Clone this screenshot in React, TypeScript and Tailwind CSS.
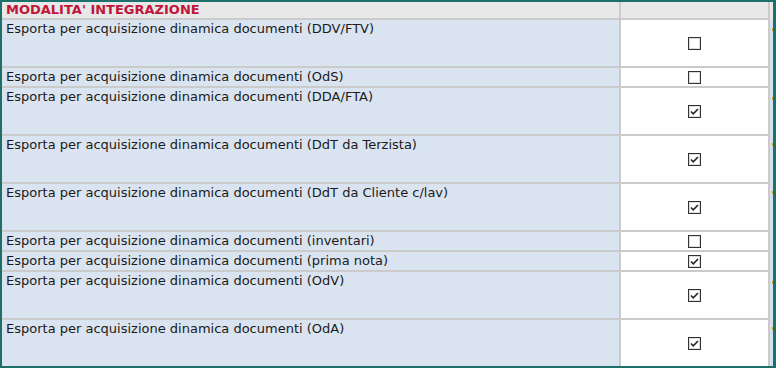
import React from "react";

type Row = { label: string; tall: boolean; checked: boolean };

const rows: Row[] = [
  { label: "Esporta per acquisizione dinamica documenti (DDV/FTV)", tall: true, checked: false },
  { label: "Esporta per acquisizione dinamica documenti (OdS)", tall: false, checked: false },
  { label: "Esporta per acquisizione dinamica documenti (DDA/FTA)", tall: true, checked: true },
  { label: "Esporta per acquisizione dinamica documenti (DdT da Terzista)", tall: true, checked: true },
  { label: "Esporta per acquisizione dinamica documenti (DdT da Cliente c/lav)", tall: true, checked: true },
  { label: "Esporta per acquisizione dinamica documenti (inventari)", tall: false, checked: false },
  { label: "Esporta per acquisizione dinamica documenti (prima nota)", tall: false, checked: true },
  { label: "Esporta per acquisizione dinamica documenti (OdV)", tall: true, checked: true },
  { label: "Esporta per acquisizione dinamica documenti (OdA)", tall: true, checked: true },
];

function Box({ checked }: { checked: boolean }) {
  return (
    <div className="w-[13px] h-[13px] border border-[#333333] bg-white flex items-center justify-center shadow-[inset_0_0_0_1px_#dcdcdc]">
      {checked && (
        <svg width="11" height="11" viewBox="0 0 11 11">
          <path d="M2 5.5 L4.3 7.8 L9 3" fill="none" stroke="#222" strokeWidth="1.6" />
        </svg>
      )}
    </div>
  );
}

export default function App() {
  return (
    <div
      className="w-[776px] h-[368px] border-l-2 border-t-2 border-b-2 border-r-[3px] border-[#1d6f69] flex bg-white overflow-hidden"
      style={{ fontFamily: '"DejaVu Sans", Verdana, sans-serif' }}
    >
      <div className="flex flex-col w-[766px]">
        <div className="flex h-[18px] border-b-2 border-[#cbcbcb] bg-[#e8e8e8]">
          <div className="w-[619px] border-r-2 border-[#cbcbcb] pl-[4px] text-[13px] leading-[16px] font-bold text-[#c0163a]">
            MODALITA' INTEGRAZIONE
          </div>
          <div className="flex-1" />
        </div>
        {rows.map((r, i) => (
          <div
            key={i}
            className={
              "flex " +
              (i === rows.length - 1 ? "h-[46px]" : "border-b-2 border-[#cbcbcb] ") +
              (i === rows.length - 1 ? "" : r.tall ? "h-[48px]" : "h-[20px]")
            }
          >
            <div className="w-[619px] border-r-2 border-[#cbcbcb] bg-[#dae4f1] pl-[4px] pt-[1px] text-[13px] leading-[16px] text-[#1a1a1a] whitespace-nowrap">
              {r.label}
            </div>
            <div className="flex-1 flex items-center justify-center bg-white">
              <Box checked={r.checked} />
            </div>
          </div>
        ))}
      </div>
      <div className="flex flex-col flex-1 border-l-2 border-[#cbcbcb]">
        <div className="h-[18px] bg-[#e8e8e8]" />
        <div className="flex-1 bg-[#d6dfee] flex flex-col items-end">
          <div className="mt-[8px] w-px h-[3px] bg-[#d4a020]" />
          <div className="mt-[66px] w-px h-[3px] bg-[#d4a020]" />
          <div className="mt-[43px] w-px h-[3px] bg-[#d4a020]" />
          <div className="mt-[45px] w-px h-[3px] bg-[#d4a020]" />
          <div className="mt-[87px] w-px h-[3px] bg-[#d4a020]" />
          <div className="mt-[43px] w-px h-[3px] bg-[#d4a020]" />
        </div>
      </div>
    </div>
  );
}
